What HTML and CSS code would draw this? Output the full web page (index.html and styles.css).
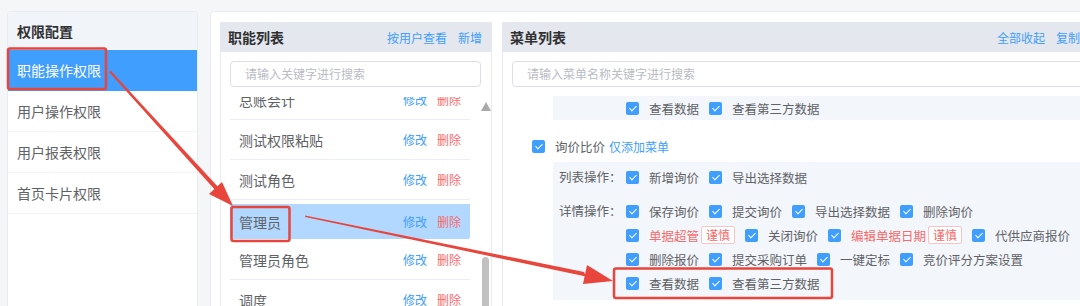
FILE: index.html
```html
<!DOCTYPE html>
<html lang="zh-CN">
<head>
  <meta charset="UTF-8">
  <meta name="viewport" content="width=device-width, initial-scale=1.0">
  <title>权限配置</title>
  <link rel="stylesheet" href="styles.css">
</head>
<body>
  <div class="page">
    <div class="side">
      <div class="side-title">权限配置</div>
      <div class="side-item on">职能操作权限</div>
      <div class="side-item">用户操作权限</div>
      <div class="side-item">用户报表权限</div>
      <div class="side-item">首页卡片权限</div>
    </div>

    <div class="main">
      <div class="card roles">
        <div class="card-head">
          <span class="card-title">职能列表</span>
          <span class="links"><a>按用户查看</a><a>新增</a></span>
        </div>
        <div class="search">请输入关键字进行搜索</div>
        <div class="role-wrap">
          <div class="role-list">
            <div class="row"><span>总账会计</span><span class="acts"><a>修改</a><a class="del">删除</a></span></div>
            <div class="row"><span>测试权限粘贴</span><span class="acts"><a>修改</a><a class="del">删除</a></span></div>
            <div class="row"><span>测试角色</span><span class="acts"><a>修改</a><a class="del">删除</a></span></div>
            <div class="row on"><span>管理员</span><span class="acts"><a>修改</a><a class="del">删除</a></span></div>
            <div class="row"><span>管理员角色</span><span class="acts"><a>修改</a><a class="del">删除</a></span></div>
            <div class="row"><span>调度</span><span class="acts"><a>修改</a><a class="del">删除</a></span></div>
          </div>
          <div class="scroll">
            <span class="scroll-up"></span>
            <span class="scroll-thumb"></span>
          </div>
        </div>
      </div>

      <div class="card menus">
        <div class="card-head">
          <span class="card-title">菜单列表</span>
          <span class="links"><a>全部收起</a><a>复制权限</a></span>
        </div>
        <div class="search">请输入菜单名称关键字进行搜索</div>
        <div class="tree">
          <div class="ops first">
            <div class="grp">
              <span class="grp-label"></span>
              <div class="grp-lines">
                <div class="line">
                  <span class="ck"><i class="cb"></i>查看数据</span>
                  <span class="ck"><i class="cb"></i>查看第三方数据</span>
                </div>
              </div>
            </div>
          </div>

          <div class="node"><i class="cb"></i><span>询价比价</span><a class="node-link">仅添加菜单</a></div>

          <div class="ops">
            <div class="grp">
              <span class="grp-label">列表操作：</span>
              <div class="grp-lines">
                <div class="line">
                  <span class="ck"><i class="cb"></i>新增询价</span>
                  <span class="ck"><i class="cb"></i>导出选择数据</span>
                </div>
              </div>
            </div>
            <div class="grp">
              <span class="grp-label">详情操作：</span>
              <div class="grp-lines">
                <div class="line">
                  <span class="ck"><i class="cb"></i>保存询价</span>
                  <span class="ck"><i class="cb"></i>提交询价</span>
                  <span class="ck"><i class="cb"></i>导出选择数据</span>
                  <span class="ck"><i class="cb"></i>删除询价</span>
                </div>
                <div class="line">
                  <span class="ck"><i class="cb"></i><span class="warn">单据超管<b class="tag">谨慎</b></span></span>
                  <span class="ck"><i class="cb"></i>关闭询价</span>
                  <span class="ck"><i class="cb"></i><span class="warn">编辑单据日期<b class="tag">谨慎</b></span></span>
                  <span class="ck"><i class="cb"></i>代供应商报价</span>
                </div>
                <div class="line">
                  <span class="ck"><i class="cb"></i>删除报价</span>
                  <span class="ck"><i class="cb"></i>提交采购订单</span>
                  <span class="ck"><i class="cb"></i>一键定标</span>
                  <span class="ck"><i class="cb"></i>竞价评分方案设置</span>
                </div>
                <div class="line">
                  <span class="ck"><i class="cb"></i>查看数据</span>
                  <span class="ck"><i class="cb"></i>查看第三方数据</span>
                </div>
              </div>
            </div>
          </div>
        </div>
      </div>
    </div>
  </div>

  <!-- annotation marks drawn over the screenshot -->
  <svg class="marks" width="1080" height="306" viewBox="0 0 1080 306">
    <g fill="none" stroke="#e8453c" stroke-width="2.5">
      <rect x="8" y="48.5" width="98" height="40.5" rx="2"/>
      <rect x="231.5" y="207" width="58" height="34" rx="2"/>
      <rect x="614" y="268.5" width="218" height="29.5" rx="2"/>
    </g>
    <g fill="#e8453c">
      <polygon points="109,72 110.5,70.5 219.5,188.5 216.5,191.5"/>
      <polygon points="233,206 209,194 222,182"/>
      <polygon points="305,215.5 305.2,217 586,276.5 584,272"/>
      <polygon points="613,281 583,284 587,265"/>
    </g>
  </svg>
</body>
</html>
```

FILE: styles.css
```css
* {
  box-sizing: border-box;
  margin: 0;
  padding: 0;
}
body {
  font-family: "Noto Sans CJK SC", "Noto Sans", sans-serif;
  background-color: #f5f6f8;
  color: #606266;
  width: 1080px;
  height: 306px;
  overflow: hidden;
  position: relative;
}
a {
  color: #409eff;
  text-decoration: none;
}
.page {
  display: flex;
  gap: 12px;
  padding: 11px 0 0 7px;
  width: 1080px;
  height: 306px;
  overflow: hidden;
}

/* left menu */
.side {
  width: 191px;
  flex: none;
  height: 320px;
  background: #fff;
  border: 1px solid #e8ebf0;
  border-radius: 4px;
  overflow: hidden;
}
.side-title {
  height: 38px;
  line-height: 38px;
  padding-left: 9px;
  background: #f1f4f9;
  font-size: 14px;
  font-weight: bold;
  color: #303133;
}
.side-item {
  height: 41px;
  line-height: 40px;
  padding-left: 9px;
  font-size: 14px;
  border-bottom: 1px solid #f2f3f5;
}
.side-item.on {
  background: #409eff;
  color: #fff;
  border-bottom-color: #409eff;
}

/* right area */
.main {
  flex: none;
  width: 920px;
  height: 320px;
  display: flex;
  gap: 10px;
  padding: 10px 0 0 9px;
  background: #fff;
  border: 1px solid #e8ebf0;
  border-radius: 4px;
}
.card {
  flex: none;
  border: 1px solid #e8ebf0;
  border-bottom: none;
  display: flex;
  flex-direction: column;
}
.card.roles {
  width: 272px;
}
.card.menus {
  width: 612px;
}
.card-head {
  height: 30px;
  display: flex;
  align-items: center;
  justify-content: space-between;
  padding: 0 10px 0 8px;
  background: #e4e7ed;
  margin: -1px -1px 0;
}
.card-title {
  font-size: 14px;
  font-weight: bold;
  color: #303133;
}
.links {
  display: flex;
  gap: 11px;
  font-size: 12px;
}
.search {
  margin: 9px 10px 0 9px;
  height: 26px;
  line-height: 24px;
  padding-left: 14px;
  border: 1px solid #dcdfe6;
  border-radius: 4px;
  font-size: 12px;
  color: #b8bcc4;
}

/* role list */
.role-wrap {
  display: flex;
  gap: 10px;
  margin: 10px 0 0 9px;
  height: 220px;
  overflow: hidden;
}
.role-list {
  width: 240px;
  flex: none;
  margin-top: -17px;
}
.row {
  height: 40px;
  display: flex;
  align-items: center;
  justify-content: space-between;
  padding: 0 9px;
  font-size: 14px;
  border-bottom: 1px solid #ebeef5;
}
.row.on {
  border-top: 4px solid transparent;
  background: #b3d8ff;
  background-clip: padding-box;
  border-radius: 3px;
  border-bottom-color: transparent;
}
.acts {
  display: flex;
  gap: 10px;
  font-size: 12px;
}
.acts .del {
  color: #f56c6c;
}
.scroll {
  width: 11px;
  flex: none;
  display: flex;
  flex-direction: column;
  align-items: center;
}
.scroll-up {
  margin-top: 5px;
  width: 0;
  height: 0;
  border-left: 5.5px solid transparent;
  border-right: 5.5px solid transparent;
  border-bottom: 9px solid #a9a9a9;
}
.scroll-thumb {
  margin-top: 146px;
  width: 7px;
  height: 70px;
  background: #c1c1c1;
  border-radius: 4px;
}

/* menu tree */
.tree {
  margin-top: 9px;
  padding-left: 29px;
  font-size: 12.5px;
}
.cb {
  width: 13px;
  height: 13px;
  flex: none;
  background: #409eff;
  border-radius: 2px;
  position: relative;
}
.cb::after {
  content: "";
  position: absolute;
  left: 4.5px;
  top: 2px;
  width: 3px;
  height: 6px;
  border: solid #fff;
  border-width: 0 1.5px 1.5px 0;
  transform: rotate(45deg);
}
.ops {
  margin: 4px 0 0 21px;
  padding: 3px 0 5px 6px;
  background: #f3f6fb;
}
.ops.first {
  margin-top: 0;
  padding: 0;
}
.grp {
  display: flex;
}
.grp + .grp {
  margin-top: 10px;
}
.grp-label {
  width: 67px;
  flex: none;
  line-height: 24px;
}
.ops.first .grp-label {
  width: 73px;
}
.line {
  height: 24px;
  display: flex;
  align-items: center;
}
.ck {
  display: inline-flex;
  align-items: center;
  gap: 10px;
  margin-right: 10px;
  white-space: nowrap;
}
.warn {
  color: #f56c6c;
  display: inline-flex;
  align-items: center;
}
.tag {
  margin-left: 2px;
  height: 18px;
  line-height: 16px;
  padding: 0 4px;
  border: 1px solid #fbc4c4;
  border-radius: 2px;
  background: #fff;
  font-size: 12px;
  font-weight: normal;
}
.node {
  margin-top: 14px;
  height: 24px;
  display: flex;
  align-items: center;
  gap: 10px;
}
.node-link {
  margin-left: -6px;
  font-size: 12px;
}

.marks {
  position: absolute;
  left: 0;
  top: 0;
  pointer-events: none;
}
```
